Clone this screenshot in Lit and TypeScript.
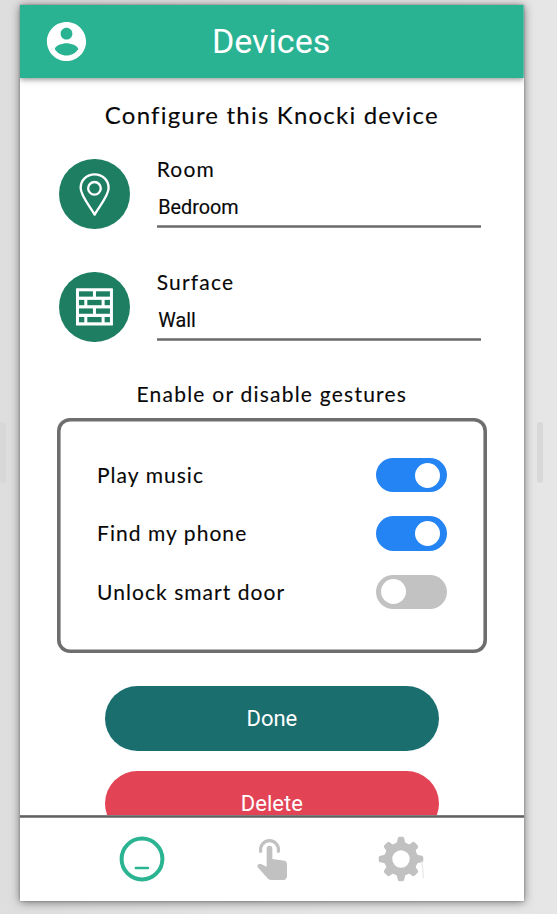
import { LitElement, html, css, svg } from "lit";
import { customElement, property, state } from "lit/decorators.js";
import { classMap } from "lit/directives/class-map.js";

const accountIcon = svg`<svg width="47" height="47" viewBox="0 0 24 24" fill="#fff"><path d="M12 2C6.48 2 2 6.48 2 12s4.48 10 10 10 10-4.48 10-10S17.52 2 12 2zm0 3c1.66 0 3 1.34 3 3s-1.34 3-3 3-3-1.34-3-3 1.34-3 3-3zm0 14.2c-2.5 0-4.71-1.28-6-3.22.03-1.99 4-3.08 6-3.08 1.99 0 5.97 1.09 6 3.08-1.29 1.94-3.5 3.22-6 3.22z"/></svg>`;

const pinIcon = svg`<svg width="70.6" height="70.6" viewBox="0 0 212 212" fill="none" stroke="#fff" stroke-width="7" stroke-linejoin="round">
  <path d="M107 167C96 146 65 111 65 87C65 63 84 46 107 46S149 63 149 87C149 111 118 146 107 167Z"/>
  <circle cx="106.500" cy="88" r="19"/>
</svg>`;

const longRow = [[9, 42], [60, 42]];
const splitRow = [[9, 16], [34, 43], [86, 16]];
const wallIcon = svg`<svg width="70.6" height="70.6" viewBox="0 0 212 212">
  <rect x="51" y="49" width="111" height="112" rx="2" fill="#fff"/>
  ${[longRow, splitRow, longRow, splitRow].map((row, r) =>
    row.map(([x, w]) => svg`<rect x=${51 + x} y=${58 + r * 25.7} width=${w} height="16" fill="#1d7e62"/>`)
  )}
</svg>`;

const deviceIcon = svg`<svg width="46" height="46" viewBox="0 0 46 46" fill="none" stroke="#2ab492">
  <circle cx="23" cy="23" r="20.400" stroke-width="4"/>
  <path d="M16.800 32H29" stroke-width="2.400" stroke-linecap="round"/>
</svg>`;

const touchIcon = svg`<svg width="32" height="44" viewBox="48 15 96 132" fill="#c1c1c1">
  <path d="M62 58A27 27 0 1 1 115 58" fill="none" stroke="#c1c1c1" stroke-width="9.500" stroke-linecap="round"/>
  <path d="M80 50Q80 41 88.500 41T97 50V81L134 86Q141 88 141 95V133Q140 144 130 144H94Q88 144 84 140L53 106Q50 101 55 97Q58 95 63 96L80 104Z"/>
</svg>`;

const gearIcon = svg`<svg width="48" height="46" viewBox="-23 -23 48 46" fill="#c1c1c1">
  <circle r="12.700" fill="none" stroke="#c1c1c1" stroke-width="8"/>
  ${[0, 90, 180, 270].map((a) => svg`<path transform="rotate(${a})" d="M-5.500-14.500Q-3.500-17-3.300-20.500Q-3-22.300-1.500-22.300H1.500Q3-22.300 3.300-20.500Q3.500-17 5.500-14.500Z"/>`)}
  ${[45, 135, 225, 315].map((a) => svg`<path transform="rotate(${a})" d="M-5.500-14Q-4-16-4-19.500Q-3.800-21.500-2-21.500H2Q3.800-21.500 4-19.500Q4-16 5.500-14Z"/>`)}
  <path d="M20.500 2Q22.300 9 22.300 19" fill="none" stroke="#dcdcdc" stroke-width=".8"/>
</svg>`;

@customElement("knocki-toggle")
class KnockiToggle extends LitElement {
  @property({ type: Boolean }) on = false;

  static styles = css`
    :host { display: block; }
    .track {
      display: flex;
      align-items: center;
      box-sizing: border-box;
      width: 70.6px;
      height: 34.2px;
      padding: 0 7px 0 5px;
      border-radius: 18px;
      background: #c2c2c2;
    }
    .track.on { justify-content: flex-end; background: #2484f4; }
    .knob { width: 25px; height: 25px; border-radius: 50%; background: #fff; }
  `;

  render() {
    return html`<div class=${classMap({ track: true, on: this.on })}><div class="knob"></div></div>`;
  }
}

@customElement("knocki-field")
class KnockiField extends LitElement {
  @property() label = "";
  @property() value = "";

  static styles = css`
    :host { display: flex; gap: 26.8px; height: 113px; }
    .badge { width: 70.6px; height: 70.6px; border-radius: 50%; background: #1d7e62; }
    .body { width: 324px; }
    .label {
      height: 28px;
      font: 21px/25px Lato, "Open Sans", sans-serif;
      letter-spacing: 1.2px;
      -webkit-text-stroke: 0.12px #080808;
      margin-top: -2.5px;
    }
    .value {
      box-sizing: border-box;
      height: 44px;
      padding: 12px 0 0 1.5px;
      font: 19.8px/24px Roboto, sans-serif;
      -webkit-text-stroke: 0.15px #080808;
      background: linear-gradient(#a0a0a0, #6c6c6c 50%, #a0a0a0) 0 100% / 100% 3px no-repeat;
    }
  `;

  render() {
    return html`
      <div class="badge"><slot></slot></div>
      <div class="body">
        <div class="label">${this.label}</div>
        <div class="value">${this.value}</div>
      </div>`;
  }
}

@customElement("app-root")
class AppRoot extends LitElement {
  @state() private gestures = [
    { name: "Play music", on: true },
    { name: "Find my phone", on: true },
    { name: "Unlock smart door", on: false },
  ];

  static styles = css`
    :host {
      display: flex;
      box-sizing: border-box;
      width: 557px;
      height: 914px;
      overflow: hidden;
      background: linear-gradient(90deg, #dfdede, #e5e5e5 60%, #e6e6e6);
      color: #080808;
    }
    svg { display: block; }
    .handle { flex: none; width: 6px; height: 61px; margin-top: 422px; border-radius: 3px; background: #d8d8d8; }
    .handle.left { border-radius: 0 3px 3px 0; }
    .handle.right { margin-left: 13.3px; }
    .phone {
      flex: none;
      display: flex;
      flex-direction: column;
      width: 503.7px;
      height: 895.6px;
      margin: 5px 0 0 14px;
      background: #fff;
      box-shadow: 0 1px 9px rgba(0, 0, 0, 0.5), 0 0 2px rgba(0, 0, 0, 0.3);
    }
    .header {
      display: grid;
      grid-template-columns: 93px 1fr 93px;
      align-items: center;
      height: 73px;
      flex: none;
      background: #2ab393;
      clip-path: inset(0 0 -14px 0);
      box-shadow: 0 1px 6px rgba(0, 0, 0, 0.5);
    }
    .account { padding-left: 23.2px; }
    .title { text-align: center; color: #fff; font: 34px/40px Roboto, sans-serif; margin: -2px 1.5px 0 0; }
    .content { flex: 1; min-height: 0; overflow: hidden; display: flex; flex-direction: column; }
    .heading {
      text-align: center;
      font: 24px/28px Lato, sans-serif;
      letter-spacing: 1.2px;
      margin-top: 23px;
      -webkit-text-stroke: 0.12px #080808;
    }
    .fields { padding: 29.700px 0 0 39.300px; }
    .sub {
      text-align: center;
      font: 21px/26px Lato, sans-serif;
      letter-spacing: 1.23px;
      margin: -3.7px 0 11px;
      -webkit-text-stroke: 0.12px #080808;
    }
    .card {
      flex: none;
      display: flex;
      flex-direction: column;
      gap: 24.2px;
      box-sizing: border-box;
      width: 430px;
      height: 235px;
      margin-left: 37px;
      padding: 40px 40px 0 40px;
      border-radius: 13px;
      box-shadow: inset 0 0 0 3.600px #6e6e6e;
    }
    .row {
      display: flex;
      align-items: center;
      justify-content: space-between;
      height: 34.2px;
      font: 21px/26px Lato, sans-serif;
      letter-spacing: 1.05px;
      -webkit-text-stroke: 0.12px #080808;
    }
    .buttons { display: flex; flex-direction: column; align-items: center; gap: 20.7px; padding-top: 33px; }
    .button {
      flex: none;
      width: 334px;
      height: 64.5px;
      border-radius: 33px;
      text-align: center;
      color: #fff;
      font: 22px/66px Roboto, sans-serif;
    }
    .done { background: #1a6e6e; }
    .delete { background: #e24455; }
    .nav {
      flex: none;
      display: flex;
      align-items: center;
      box-sizing: border-box;
      height: 85.4px;
      padding: 2.4px 0 0 99px;
      background: linear-gradient(#8c8c8c, #606060 50%, #a0a0a0) 0 0 / 100% 3px no-repeat;
    }
    .touch { margin-left: 90.5px; }
    .gear { margin-left: 90.3px; }
  `;

  render() {
    return html`
      <div class="handle left"></div>
      <div class="phone">
        <div class="header">
          <div class="account">${accountIcon}</div>
          <div class="title">Devices</div>
        </div>
        <div class="content">
          <div class="heading">Configure this Knocki device</div>
          <div class="fields">
            <knocki-field label="Room" value="Bedroom">${pinIcon}</knocki-field>
            <knocki-field label="Surface" value="Wall">${wallIcon}</knocki-field>
          </div>
          <div class="sub">Enable or disable gestures</div>
          <div class="card">
            ${this.gestures.map((g) => html`
              <div class="row"><span>${g.name}</span><knocki-toggle ?on=${g.on}></knocki-toggle></div>`)}
          </div>
          <div class="buttons">
            <div class="button done">Done</div>
            <div class="button delete">Delete</div>
          </div>
        </div>
        <div class="nav">
          <div class="device">${deviceIcon}</div>
          <div class="touch">${touchIcon}</div>
          <div class="gear">${gearIcon}</div>
        </div>
      </div>
      <div class="handle right"></div>`;
  }
}
